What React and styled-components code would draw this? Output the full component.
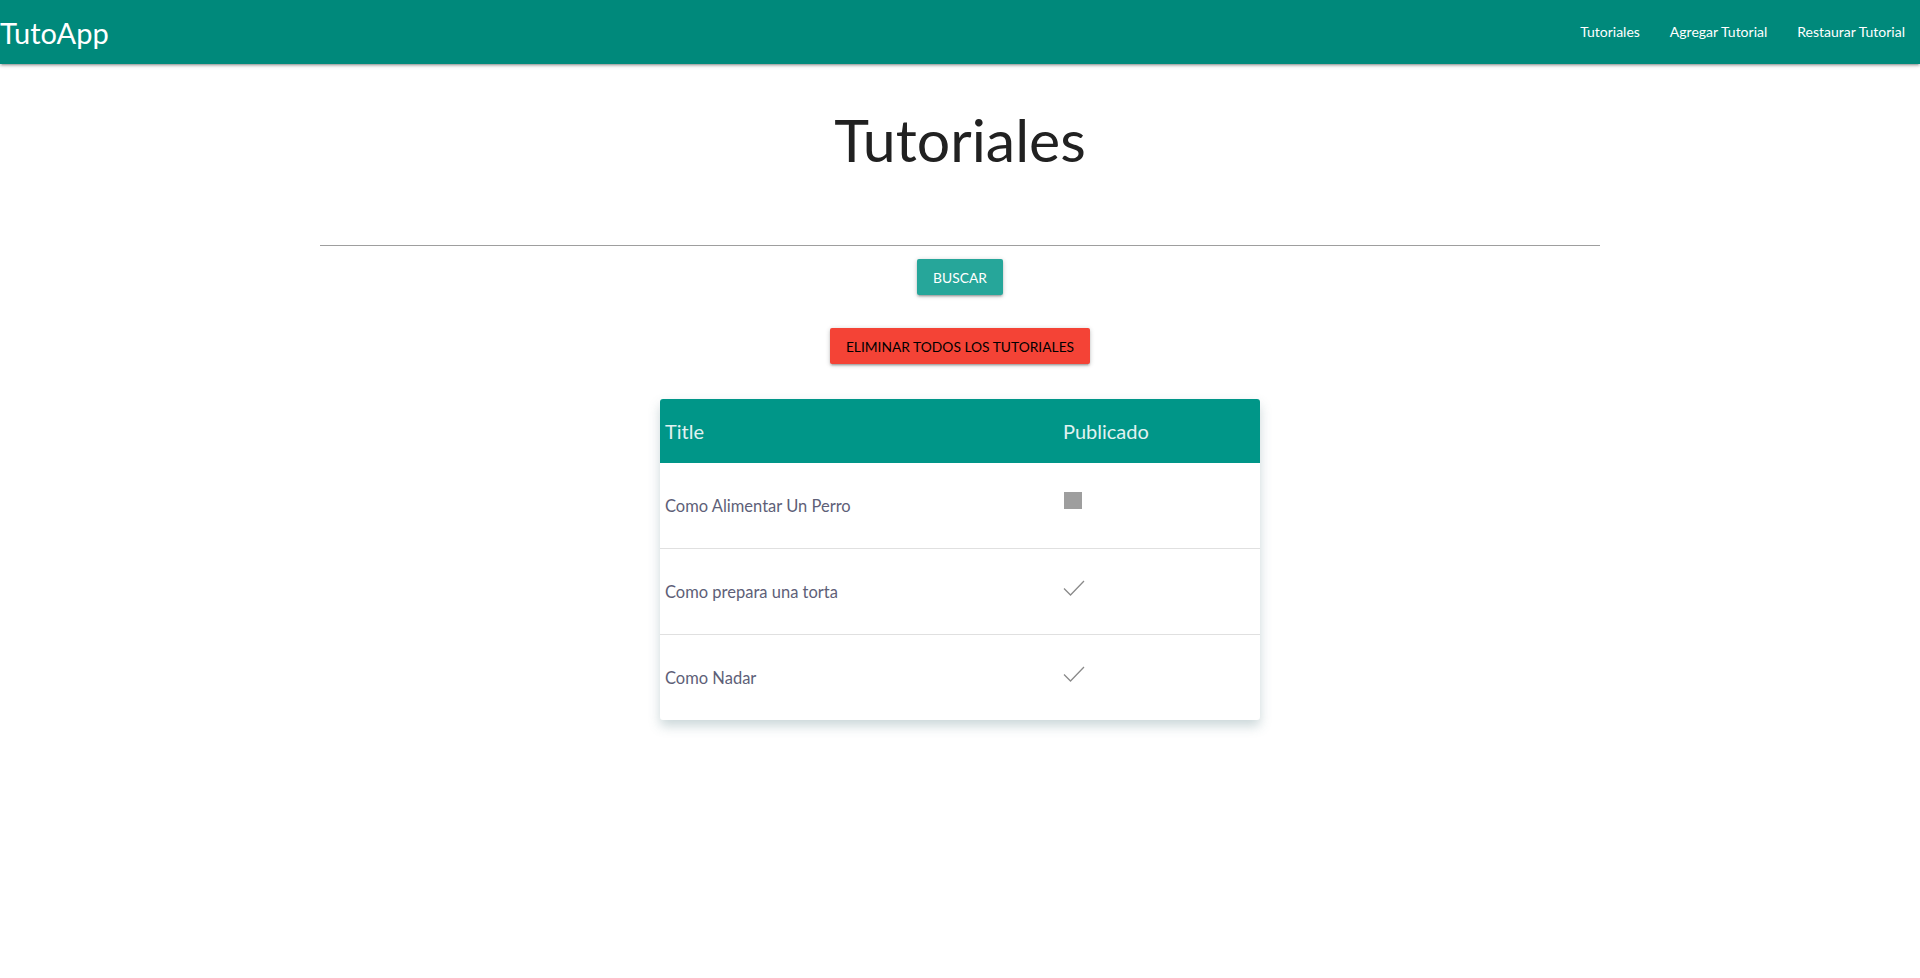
import React from "react";
import styled, { createGlobalStyle } from "styled-components";

const tutorials = [
	{ title: "Como Alimentar Un Perro", published: false },
	{ title: "Como prepara una torta", published: true },
	{ title: "Como Nadar", published: true },
];

export default function App() {
	return (
		<>
			<GlobalStyle />
			<Nav>
				<Brand>TutoApp</Brand>
				<Links>
					<NavLink>Tutoriales</NavLink>
					<NavLink>Agregar Tutorial</NavLink>
					<NavLink>Restaurar Tutorial</NavLink>
				</Links>
			</Nav>

			<Container>
				<Heading>Tutoriales</Heading>
				<Divider />
				<Button color="#26a69a" text="#fff">
					Buscar
				</Button>
				<Button color="#f44336" text="#000" spaced>
					Eliminar todos los tutoriales
				</Button>

				<Table>
					<thead>
						<tr>
							<HeadCell>Title</HeadCell>
							<HeadCell side>Publicado</HeadCell>
						</tr>
					</thead>
					<tbody>
						{tutorials.map((t) => (
							<Row key={t.title}>
								<Cell>{t.title}</Cell>
								<Cell side>
									{t.published ? (
										<Check width="22" height="18" viewBox="0 0 22 18">
											<path
												d="M1 9.5 L7.5 16 L21 2"
												fill="none"
												stroke="#8a8a8a"
												strokeWidth="1.3"
											/>
										</Check>
									) : (
										<Square />
									)}
								</Cell>
							</Row>
						))}
					</tbody>
				</Table>
			</Container>
		</>
	);
}

const GlobalStyle = createGlobalStyle`
	body {
		margin: 0;
		background: #fff;
		font-family: Lato, "Open Sans", sans-serif;
	}
`;

const Nav = styled.nav`
	display: flex;
	justify-content: space-between;
	align-items: center;
	height: 64px;
	background: #00897b;
	box-shadow: 0 2px 2px 0 rgba(0, 0, 0, 0.14), 0 3px 1px -2px rgba(0, 0, 0, 0.12),
		0 1px 5px 0 rgba(0, 0, 0, 0.2);
`;
const Brand = styled.a`
	color: #fff;
	font-size: 29px;
	line-height: 64px;
	padding-top: 2px;
`;
const Links = styled.ul`
	display: flex;
	margin: 0;
	padding: 0;
	list-style: none;
`;
const NavLink = styled.li`
	color: #fff;
	font-size: 14px;
	line-height: 64px;
	padding: 0 15px;
`;

const Container = styled.main`
	display: flex;
	flex-direction: column;
	align-items: center;
	max-width: 1280px;
	margin: 0 auto;
`;
const Heading = styled.h1`
	margin: 40px 0 0;
	font-size: 59px;
	font-weight: 400;
	line-height: 72px;
	color: #212121;
`;
const Divider = styled.hr`
	align-self: stretch;
	margin: 69px 0 0;
	border: none;
	border-top: 1px solid #9e9e9e;
`;
const Button = styled.button`
	margin-top: ${(p) => (p.spaced ? "33px" : "13px")};
	height: 36px;
	padding: 0 16px;
	border: none;
	border-radius: 2px;
	background: ${(p) => p.color};
	color: ${(p) => p.text};
	font-family: Lato, sans-serif;
	font-size: 13.8px;
	text-transform: uppercase;
	box-shadow: 0 2px 2px 0 rgba(0, 0, 0, 0.14), 0 3px 1px -2px rgba(0, 0, 0, 0.12),
		0 1px 5px 0 rgba(0, 0, 0, 0.2);
`;

const Table = styled.table`
	width: 600px;
	margin: 35px 0 40px;
	table-layout: fixed;
	border-collapse: separate;
	border-spacing: 0;
	border-radius: 3px;
	overflow: hidden;
	box-shadow: 0 6px 12px rgba(70, 110, 120, 0.28);
`;
const HeadCell = styled.th`
	box-sizing: border-box;
	width: ${(p) => (p.side ? "202px" : "398px")};
	height: 64px;
	padding: 0 5px;
	background: #009688;
	color: #e0f2f1;
	font-size: 20px;
	font-weight: 400;
	text-align: left;
`;
const Row = styled.tr`
	& + & td {
		border-top: 1px solid #e0e0e0;
	}
`;
const Cell = styled.td`
	height: 85px;
	padding: 0 5px;
	color: #5e5f78;
	font-size: 16.5px;
	vertical-align: middle;
`;
const Square = styled.span`
	display: block;
	width: 18px;
	height: 17px;
	margin: 0 0 10px 1px;
	background: #9e9e9e;
`;
const Check = styled.svg`
	display: block;
	margin-bottom: 8px;
`;
